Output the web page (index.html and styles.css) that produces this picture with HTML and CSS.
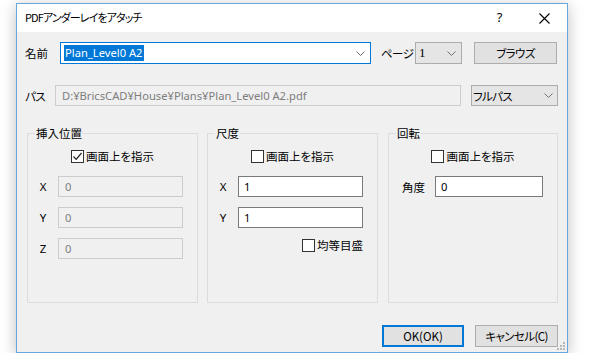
FILE: index.html
```html
<!DOCTYPE html>
<html lang="ja">

<head>
    <meta charset="UTF-8">
    <meta name="viewport" content="width=device-width, initial-scale=1.0">
    <title>PDFアンダーレイをアタッチ</title>
    <link rel="stylesheet" href="styles.css">
</head>

<body>

    <div class="dialog">
        <div class="titlebar">
            <span class="title">PDFアンダーレイをアタッチ</span>
            <span class="tb-btn help">?</span>
            <span class="tb-btn close">
                <svg width="11" height="11" viewBox="0 0 11 11"><path d="M0.5 0.5L10.5 10.5M10.5 0.5L0.5 10.5" stroke="#000" stroke-width="1.1" fill="none"/></svg>
            </span>
        </div>

        <div class="content">
            <div class="row row-name">
                <span class="lbl lbl-name">名前</span>
                <div class="combo combo-name">
                    <span class="sel">Plan_Level0 A2</span>
                    <svg class="chev" width="9" height="5" viewBox="0 0 9 5"><path d="M0.5 0.5L4.5 4.5L8.5 0.5" stroke="#707070" fill="none"/></svg>
                </div>
                <span class="lbl lbl-page kana">ページ</span>
                <div class="combo combo-page">
                    <span class="num">1</span>
                    <svg class="chev" width="9" height="5" viewBox="0 0 9 5"><path d="M0.5 0.5L4.5 4.5L8.5 0.5" stroke="#707070" fill="none"/></svg>
                </div>
                <button class="btn btn-browse kana">ブラウズ</button>
            </div>

            <div class="row row-path">
                <span class="lbl lbl-path kana">パス</span>
                <div class="textbox disabled path">D:¥BricsCAD¥House¥Plans¥Plan_Level0 A2.pdf</div>
                <div class="combo combo-mode">
                    <span class="kana">フルパス</span>
                    <svg class="chev" width="9" height="5" viewBox="0 0 9 5"><path d="M0.5 0.5L4.5 4.5L8.5 0.5" stroke="#707070" fill="none"/></svg>
                </div>
            </div>

            <div class="groups">
                <div class="group g-insert">
                    <div class="group-title">挿入位置</div>
                    <div class="check-row">
                        <span class="checkbox">
                            <svg width="11" height="11" viewBox="0 0 11 11"><path d="M1.5 5.5L4.2 8.3L9.5 2" stroke="#222" stroke-width="1.2" fill="none"/></svg>
                        </span>
                        画面上を指示
                    </div>
                    <div class="coord first"><span class="axis">X</span><div class="textbox disabled">0</div></div>
                    <div class="coord"><span class="axis">Y</span><div class="textbox disabled">0</div></div>
                    <div class="coord"><span class="axis">Z</span><div class="textbox disabled">0</div></div>
                </div>

                <div class="group g-scale">
                    <div class="group-title">尺度</div>
                    <div class="check-row"><span class="checkbox"></span>画面上を指示</div>
                    <div class="coord first"><span class="axis">X</span><div class="textbox">1</div></div>
                    <div class="coord"><span class="axis">Y</span><div class="textbox">1</div></div>
                    <div class="check-row uniform"><span class="checkbox"></span>均等目盛</div>
                </div>

                <div class="group g-rotate">
                    <div class="group-title">回転</div>
                    <div class="check-row"><span class="checkbox"></span>画面上を指示</div>
                    <div class="coord first angle"><span class="axis">角度</span><div class="textbox">0</div></div>
                </div>
            </div>

            <div class="buttons">
                <button class="btn btn-ok">OK(OK)</button>
                <button class="btn btn-cancel kana">キャンセル(C)</button>
            </div>
        </div>

        <svg class="grip" width="8" height="8" viewBox="0 0 8 8">
            <rect x="6" y="0" width="2" height="2" fill="#b8b8b8"/>
            <rect x="3" y="3" width="2" height="2" fill="#b8b8b8"/>
            <rect x="6" y="3" width="2" height="2" fill="#b8b8b8"/>
            <rect x="0" y="6" width="2" height="2" fill="#b8b8b8"/>
            <rect x="3" y="6" width="2" height="2" fill="#b8b8b8"/>
            <rect x="6" y="6" width="2" height="2" fill="#b8b8b8"/>
        </svg>
    </div>

</body>

</html>
```

FILE: styles.css
```css
body {
    margin: 0;
    padding: 0;
    background-color: #fff;
    font-family: "Noto Sans CJK JP", sans-serif;
    font-size: 11.5px;
    color: #000;
    font-feature-settings: "palt";
}

.kana {
    letter-spacing: -0.6px;
}

.dialog {
    position: relative;
    box-sizing: border-box;
    width: 552px;
    height: 350px;
    margin: 3px 0 0 16px;
    border: 1px solid #6aa6dc;
    background-color: #f0f0f0;
    box-shadow: 0 3px 14px rgba(0, 0, 0, 0.26);
}

.titlebar {
    display: flex;
    align-items: center;
    height: 28px;
    background-color: #fff;
}

.title {
    flex: 1;
    padding-left: 8px;
    padding-bottom: 2px;
    font-size: 11px;
    letter-spacing: -0.9px;
}

.tb-btn {
    display: flex;
    justify-content: center;
    align-items: center;
    width: 45px;
    height: 28px;
}

.help {
    font-family: "Noto Sans", sans-serif;
    font-size: 13px;
    padding-bottom: 2px;
    box-sizing: border-box;
}

.content {
    padding: 0 9px 0 8px;
}

.row {
    display: flex;
    align-items: center;
}

.row-name {
    margin-top: 10px;
    height: 22px;
}

.row-path {
    margin-top: 21px;
    height: 21px;
}

.lbl {
    white-space: nowrap;
}

.lbl-name {
    width: 35px;
}

.lbl-page {
    width: 34px;
    margin-left: 10px;
}

.lbl-path {
    width: 30px;
}

.combo {
    box-sizing: border-box;
    display: flex;
    align-items: center;
    height: 22px;
    border: 1px solid #acacac;
    background-color: #e5e5e5;
    padding-left: 2px;
    padding-right: 5px;
}

.combo span {
    flex: 1;
}

.combo-name {
    width: 311px;
    border-color: #0078d7;
    background-color: #fff;
}

.combo-name .sel {
    flex: 0 0 auto;
    margin-left: 1px;
    margin-right: auto;
    padding: 0 1px;
    height: 16px;
    line-height: 16px;
    background-color: #0078d7;
    color: #fff;
    font-family: "Noto Sans", sans-serif;
    font-size: 11.2px;
}

.combo-page {
    width: 47px;
}

.combo-page .num {
    font-family: "Liberation Serif", serif;
    font-size: 13px;
    padding-left: 1px;
}

.combo-mode {
    width: 87px;
    height: 21px;
    margin-left: 10px;
    padding-left: 1px;
    padding-right: 4px;
}

.btn {
    box-sizing: border-box;
    height: 22px;
    padding: 0;
    border: 1px solid #adadad;
    background-color: #e1e1e1;
    font-family: "Noto Sans CJK JP", sans-serif;
    font-size: 11.5px;
    font-feature-settings: "palt";
    color: #000;
}

.btn-browse {
    width: 83px;
    margin-left: 12px;
}

.textbox {
    box-sizing: border-box;
    height: 21px;
    line-height: 19px;
    border: 1px solid #7a7a7a;
    background-color: #fff;
    padding-left: 5px;
    font-family: "Noto Sans", sans-serif;
    font-size: 11.2px;
    white-space: nowrap;
    overflow: hidden;
}

.textbox.disabled {
    border-color: #cccccc;
    background-color: #f0f0f0;
    color: #7d7d7d;
    padding-left: 6px;
}

.path {
    width: 406px;
}

.groups {
    display: flex;
    margin-top: 27px;
    margin-left: 2px;
}

.group {
    box-sizing: border-box;
    display: flex;
    flex-direction: column;
    height: 170px;
    border: 1px solid #dcdcdc;
}

.g-insert {
    width: 171px;
}

.g-scale {
    width: 171px;
    margin-left: 9px;
}

.g-rotate {
    width: 170px;
    margin-left: 10px;
}

.group-title {
    align-self: flex-start;
    margin: -9px 0 0 7px;
    padding: 0 1px;
    line-height: 16px;
    background-color: #f0f0f0;
}

.check-row {
    display: flex;
    justify-content: center;
    align-items: center;
    height: 16px;
    margin-top: 7px;
    gap: 2px;
}

.checkbox {
    box-sizing: border-box;
    display: flex;
    justify-content: center;
    align-items: center;
    width: 13px;
    height: 13px;
    border: 1px solid #333;
    background-color: #fff;
}

.check-row.uniform {
    justify-content: flex-end;
    padding-right: 14px;
    margin-top: 9px;
}

.coord {
    display: flex;
    align-items: center;
    margin-top: 10px;
}

.coord.first {
    margin-top: 12px;
}

.axis {
    width: 30px;
    text-align: center;
    font-family: "Noto Sans", sans-serif;
    font-size: 11.5px;
}

.coord .textbox {
    width: 125px;
}

.coord.angle {
    padding-left: 13px;
}

.coord.angle .axis {
    width: 33px;
    text-align: left;
    font-family: "Noto Sans CJK JP", sans-serif;
}

.coord.angle .textbox {
    width: 108px;
}

.buttons {
    display: flex;
    justify-content: flex-end;
    margin-top: 22px;
}

.btn-ok {
    width: 82px;
    border: 2px solid #0078d7;
}

.btn-cancel {
    width: 83px;
    margin-left: 11px;
}

.grip {
    position: absolute;
    right: 2px;
    bottom: 2px;
}
```
